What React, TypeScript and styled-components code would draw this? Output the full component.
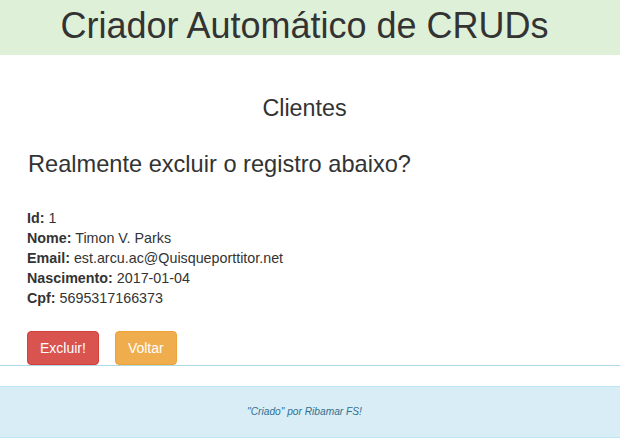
import React from "react";
import styled, { createGlobalStyle } from "styled-components";

const Global = createGlobalStyle`
  html, body { margin: 0; padding: 0; background: #fff; }
  body {
    font-family: "Liberation Sans", Arial, Helvetica, sans-serif;
    font-size: 14px;
    line-height: 1.42857;
    color: #333;
  }
  * { box-sizing: border-box; }
`;

const Header = styled.header`
  height: 55px;
  background: #dff0d8;
  padding: 6px 11px 0 0;
`;

const Title = styled.h1`
  margin: 0;
  font-size: 36px;
  font-weight: 400;
  line-height: 1.1;
  text-align: center;
  color: #333;
`;

const Main = styled.main`
  padding: 40px 0 0 27px;
`;

const Section = styled.h3`
  margin: 0 11px 0 -27px;
  font-size: 23.3px;
  font-weight: 400;
  line-height: 26.4px;
  text-align: center;
`;

const Question = styled.h3`
  margin: 30px 0 0 1px;
  font-size: 23.6px;
  font-weight: 400;
  line-height: 26.4px;
`;

const Details = styled.div`
  margin-top: 30px;
  display: flex;
  flex-direction: column;
`;

const Row = styled.div`
  font-size: 14.3px;
  line-height: 20px;
  b { font-weight: 700; }
`;

const Actions = styled.div`
  margin-top: 23px;
  display: flex;
  gap: 16px;
`;

const Button = styled.button<{ $variant: "danger" | "warning" }>`
  font-family: inherit;
  font-size: 14px;
  line-height: 20px;
  height: 34px;
  padding: 6px 12px;
  border-radius: 4px;
  color: #fff;
  cursor: pointer;
  background: ${(p) => (p.$variant === "danger" ? "#d9534f" : "#f0ad4e")};
  border: 1px solid ${(p) => (p.$variant === "danger" ? "#d43f3a" : "#eea236")};
`;

const Rule = styled.hr`
  margin: 0;
  border: 0;
  border-top: 1px solid #add8e6;
`;

const Footer = styled.footer`
  margin-top: 20px;
  height: 52px;
  background: #d9edf7;
  border-top: 1px solid #bce8f1;
  border-bottom: 1px solid #bce8f1;
  display: flex;
  align-items: center;
  justify-content: center;
  padding: 0 11px 0 0;
`;

const Credit = styled.i`
  font-size: 10.2px;
  color: #31708f;
`;

export default function App() {
  return (
    <>
      <Global />
      <Header>
        <Title>Criador Automático de CRUDs</Title>
      </Header>
      <Main>
        <Section>Clientes</Section>
        <Question>Realmente excluir o registro abaixo?</Question>
        <Details>
          <Row><b>Id:</b> 1</Row>
          <Row><b>Nome:</b> Timon V. Parks</Row>
          <Row><b>Email:</b> est.arcu.ac@Quisqueporttitor.net</Row>
          <Row><b>Nascimento:</b> 2017-01-04</Row>
          <Row><b>Cpf:</b> 5695317166373</Row>
        </Details>
        <Actions>
          <Button $variant="danger">Excluir!</Button>
          <Button $variant="warning">Voltar</Button>
        </Actions>
      </Main>
      <Rule />
      <Footer>
        <Credit>"Criado" por Ribamar FS!</Credit>
      </Footer>
    </>
  );
}
